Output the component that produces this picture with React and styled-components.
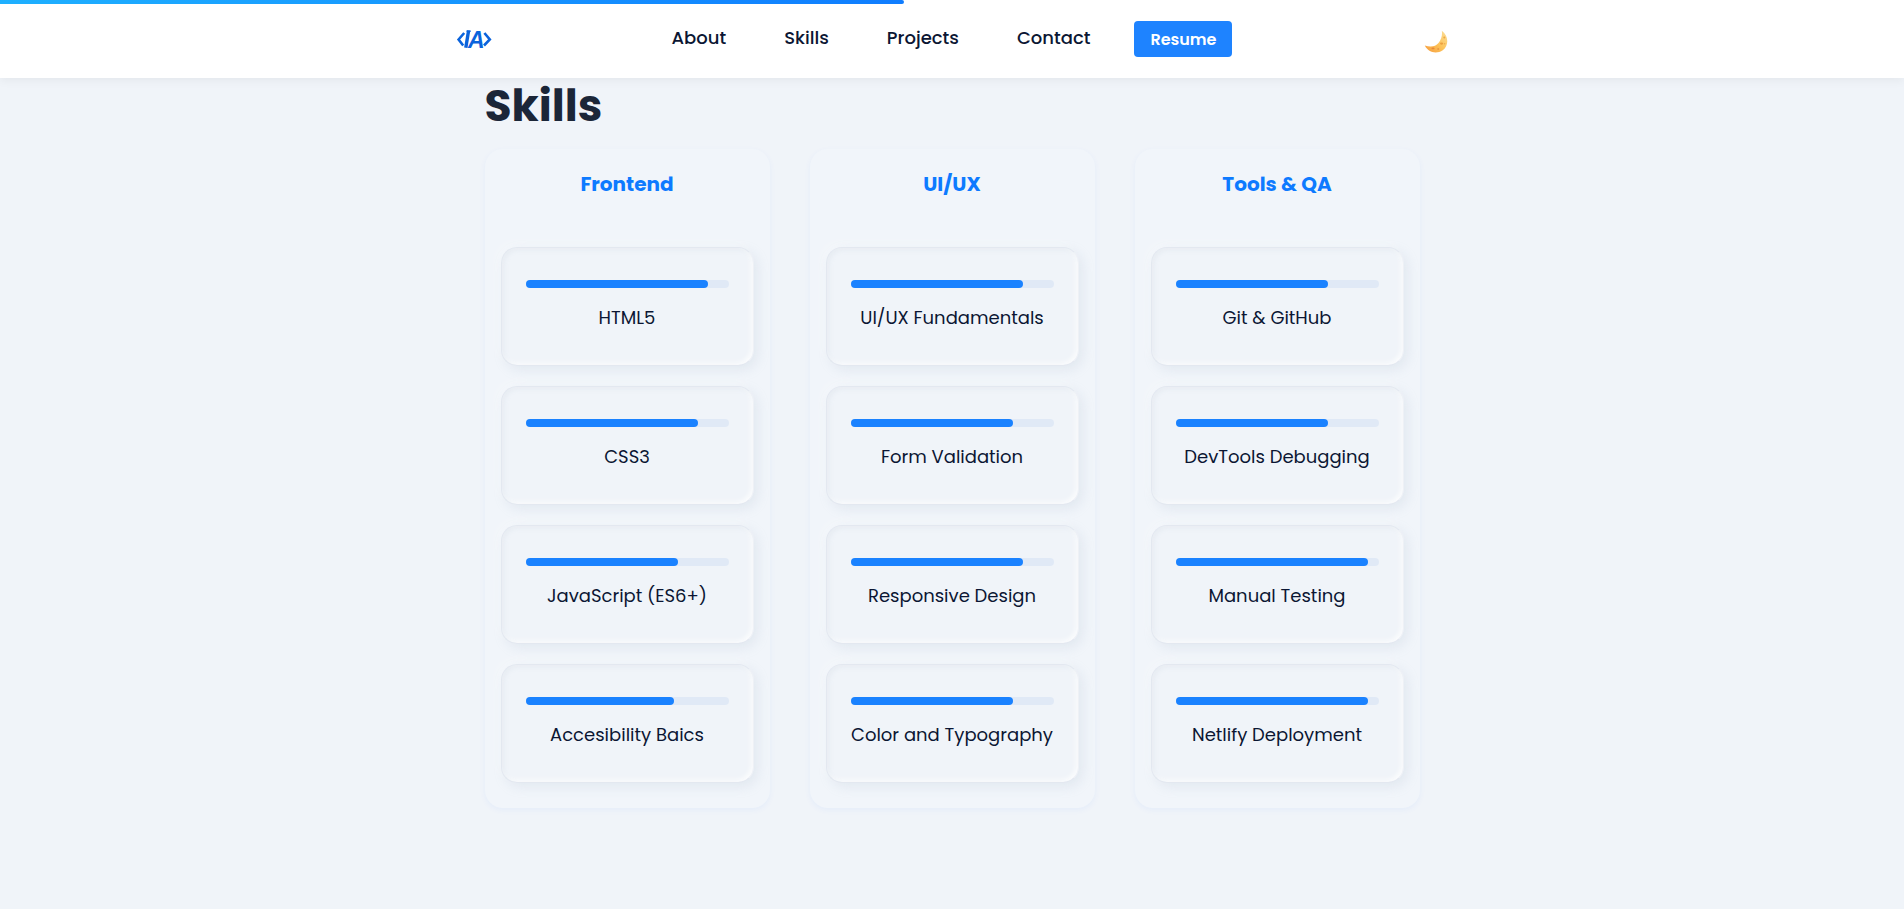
import React from 'react';
import styled, { createGlobalStyle } from 'styled-components';

const GlobalStyle = createGlobalStyle`
  * { box-sizing: border-box; }
  body {
    margin: 0;
    background: #f0f4f9;
    color: #0b1633;
    font-family: Poppins, Inter, "Liberation Sans", sans-serif;
    font-size: 18px;
  }
`;

const Header = styled.header`
  position: sticky;
  top: 0;
  z-index: 2;
  background: #fff;
  box-shadow: 0 2px 10px rgba(0, 0, 0, 0.06);
`;

const ScrollTrack = styled.div`
  height: 4px;
`;

const ScrollFill = styled.div`
  height: 100%;
  border-radius: 0 2px 2px 0;
  background: linear-gradient(90deg, #1eb0ff, #0f7dff);
`;

const HeaderInner = styled.div`
  display: flex;
  align-items: center;
  justify-content: space-between;
  max-width: 992px;
  height: 74px;
  margin: 0 auto;
  padding-bottom: 4px;
`;

const LogoLink = styled.a`
  display: flex;
  width: 36px;
  color: #0a63dc;
`;

const LogoLetter = styled.text`
  fill: currentColor;
  stroke: none;
  font: italic 700 23px "Liberation Sans Narrow", "Liberation Sans", sans-serif;
`;

const Nav = styled.nav`
  display: flex;
  align-items: center;
  gap: 58px;
`;

const NavLink = styled.a`
  padding-bottom: 2px;
  color: inherit;
  font-weight: 500;
  line-height: 28px;
  text-decoration: none;
`;

const ResumeButton = styled.button`
  height: 36px;
  margin-left: -14px;
  padding: 0 16px;
  border: 0;
  border-radius: 4px;
  background: #1e83ff;
  color: #fff;
  font: inherit;
  font-size: 16px;
  font-weight: 600;
`;

const ThemeButton = styled.button`
  display: flex;
  justify-content: flex-end;
  width: 36px;
  padding: 6px 0 0;
  border: 0;
  background: none;
`;

const Section = styled.main`
  max-width: 935px;
  margin: 0 auto;
  padding-bottom: 64px;
`;

const Heading = styled.h1`
  margin: 0;
  padding-bottom: 16px;
  color: #1b2638;
  font-size: 44px;
  font-weight: 700;
  line-height: 55px;
`;

const Columns = styled.div`
  display: grid;
  grid-template-columns: repeat(3, 1fr);
  gap: 40px;
`;

const Column = styled.section`
  padding: 16px 16px 25px;
  border-radius: 18px;
  background: #f1f5fa;
  box-shadow: 0 2px 6px rgba(0, 98, 255, 0.05);
`;

const ColumnTitle = styled.h2`
  margin: 0 0 44px;
  color: #0d7aff;
  font-size: 20px;
  font-weight: 700;
  line-height: 38px;
  text-align: center;
`;

const SkillList = styled.ul`
  display: grid;
  gap: 20px;
  margin: 0;
  padding: 0;
  list-style: none;
`;

const SkillCard = styled.li`
  height: 119px;
  padding: 32px 24px 0;
  border: 1px solid #e3e8f0;
  border-right-color: #eef1f6;
  border-radius: 16px;
  background: #f0f4f9;
  box-shadow:
    4px 4px 12px rgba(163, 177, 198, 0.18),
    -4px -4px 12px rgba(255, 255, 255, 0.3),
    inset 2px 2px 5px rgba(163, 177, 198, 0.12),
    inset -2px -2px 5px rgba(255, 255, 255, 0.8);
  text-align: center;
`;

const Meter = styled.div`
  height: 8px;
  border-radius: 4px;
  background: #e0e9f6;
`;

const MeterFill = styled.div`
  height: 100%;
  border-radius: 4px;
  background: #1a82ff;
`;

const SkillName = styled.p`
  margin: 16px -8px 0;
  font-size: 18px;
  font-weight: 400;
  line-height: 28px;
  white-space: nowrap;
`;

const groups = [
  { title: 'Frontend', skills: [['HTML5', 90], ['CSS3', 85], ['JavaScript (ES6+)', 75], ['Accesibility Baics', 73]] },
  { title: 'UI/UX', skills: [['UI/UX Fundamentals', 85], ['Form Validation', 80], ['Responsive Design', 85], ['Color and Typography', 80]] },
  { title: 'Tools & QA', skills: [['Git & GitHub', 75], ['DevTools Debugging', 75], ['Manual Testing', 95], ['Netlify Deployment', 95]] },
];

const Logo = () => (
  <svg width="36" height="32" viewBox="0 -5 36 32" fill="none" stroke="currentColor" strokeWidth="2.6" aria-hidden="true">
    <path d="M8.2 5 L2.6 11.5 L7.2 17.5" />
    <path d="M12.6 2.5 L9.8 19.8" strokeWidth="3.4" />
    <path d="M10.6 3.2 H14.6" strokeWidth="1.6" />
    <LogoLetter x="12" y="20">A</LogoLetter>
    <path d="M28.4 5 L33.8 11.5 L28 17.5" />
  </svg>
);

const Moon = () => (
  <svg width="24" height="24" viewBox="0 0 24 24" aria-hidden="true">
    <defs>
      <linearGradient id="moon" x1="0" y1="1" x2="1" y2="0">
        <stop offset="0" stopColor="#f59a3c" />
        <stop offset="0.5" stopColor="#fdc45a" />
        <stop offset="1" stopColor="#fbdf9c" />
      </linearGradient>
    </defs>
    <path d="M17.8 .8 C25 6 24.8 16 18.8 20.2 C13 24.2 4.5 23 .8 15.6 C7 17.6 11.5 16.5 14.5 13 C17.5 9.5 18.5 5 17.8 .8Z" fill="url(#moon)" />
    <circle cx="20.3" cy="7.6" r="1" fill="#eda744" />
    <ellipse cx="17.6" cy="13.6" rx="1.6" ry="1.1" fill="#eda040" />
    <circle cx="14.2" cy="19" r="1" fill="#e99a45" />
    <ellipse cx="9" cy="18.4" rx="1.6" ry=".9" fill="#e88a38" />
    <circle cx="20.6" cy="13.8" r=".8" fill="#f0ad4c" />
  </svg>
);

export default function App() {
  return (
    <>
      <GlobalStyle />
      <Header>
        <ScrollTrack>
          <ScrollFill style={{ width: '47.5%' }} />
        </ScrollTrack>
        <HeaderInner>
          <LogoLink href="#home" aria-label="Home"><Logo /></LogoLink>
          <Nav>
            <NavLink href="#about">About</NavLink>
            <NavLink href="#skills">Skills</NavLink>
            <NavLink href="#projects">Projects</NavLink>
            <NavLink href="#contact">Contact</NavLink>
            <ResumeButton type="button">Resume</ResumeButton>
          </Nav>
          <ThemeButton type="button" aria-label="Switch to dark theme"><Moon /></ThemeButton>
        </HeaderInner>
      </Header>
      <Section id="skills">
        <Heading>Skills</Heading>
        <Columns>
          {groups.map(({ title, skills }) => (
            <Column key={title}>
              <ColumnTitle>{title}</ColumnTitle>
              <SkillList>
                {skills.map(([name, level]) => (
                  <SkillCard key={name}>
                    <Meter>
                      <MeterFill style={{ width: `${level}%` }} />
                    </Meter>
                    <SkillName>{name}</SkillName>
                  </SkillCard>
                ))}
              </SkillList>
            </Column>
          ))}
        </Columns>
      </Section>
    </>
  );
}
